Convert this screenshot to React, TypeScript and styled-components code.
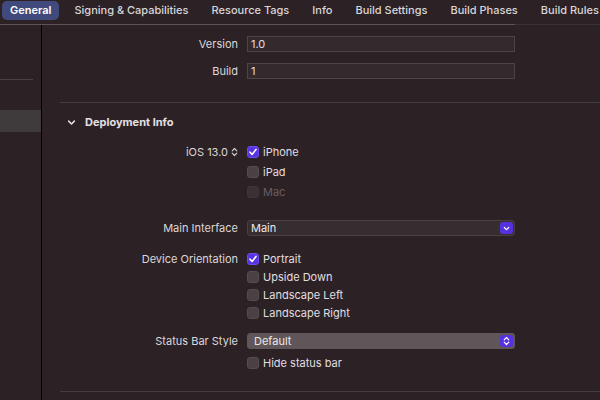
import React from 'react';
import styled, { createGlobalStyle } from 'styled-components';

const GlobalStyle = createGlobalStyle`
  html, body {
    margin: 0;
    padding: 0;
    background: #2c2226;
  }
  #root {
    width: 600px;
    height: 400px;
    overflow: hidden;
  }
`;

const Page = styled.div`
  display: flex;
  flex-direction: column;
  width: 600px;
  height: 400px;
  background: #2c2226;
  color: #dcd7d9;
  font-family: Inter, 'Noto Sans', sans-serif;
  font-size: 11px;
  overflow: hidden;
`;

const TabBar = styled.div`
  display: flex;
  align-items: center;
  height: 24px;
  flex-shrink: 0;
  padding-left: 2px;
`;

const Tab = styled.div<{ $active?: boolean }>`
  display: flex;
  align-items: center;
  height: 19px;
  margin-top: -4px;
  padding: 0 8px;
  margin-right: 7px;
  border-radius: 5px;
  background: ${({ $active }) => ($active ? '#414a7c' : 'transparent')};
  color: ${({ $active }) => ($active ? '#ffffff' : '#dad5d7')};
  font-weight: ${({ $active }) => ($active ? 600 : 500)};
  white-space: nowrap;
  flex-shrink: 0;
`;

const TabLine = styled.div`
  height: 1px;
  flex-shrink: 0;
  background: linear-gradient(to right, #5b5459 515px, #3a3135 515px);
`;

const Body = styled.div`
  display: flex;
  flex: 1;
  min-height: 0;
`;

const Sidebar = styled.div`
  width: 41px;
  flex-shrink: 0;
  border-right: 1px solid #000;
  display: flex;
  flex-direction: column;
`;

const SideRule = styled.div`
  margin-top: 54px;
  width: 33px;
  height: 1px;
  background: #4a4144;
`;

const SideSelected = styled.div`
  margin-top: 30px;
  height: 22px;
  background: #3f3b3c;
`;

const Content = styled.div`
  flex: 1;
  display: flex;
  flex-direction: column;
`;

const Row = styled.div<{ $h: number; $mt?: number }>`
  display: flex;
  align-items: center;
  height: ${({ $h }) => $h}px;
  margin-top: ${({ $mt }) => $mt ?? 0}px;
`;

const Label = styled.div`
  width: 205px;
  flex-shrink: 0;
  padding-right: 9px;
  box-sizing: border-box;
  text-align: right;
  white-space: nowrap;
  display: flex;
  justify-content: flex-end;
  align-items: center;
  gap: 3px;
`;

const Field = styled.div`
  width: 268px;
  height: 16px;
  box-sizing: border-box;
  border: 1px solid #4d4447;
  background: #342a2e;
  padding-left: 3px;
  display: flex;
  align-items: center;
  color: #e2dee0;
`;

const Popup = styled.div<{ $light?: boolean }>`
  width: 268px;
  height: 16px;
  box-sizing: border-box;
  border-radius: 3px;
  border: 1px solid ${({ $light }) => ($light ? '#5f5659' : '#4a4044')};
  background: ${({ $light }) => ($light ? '#5f5659' : '#362d30')};
  padding: 0 1px 0 ${({ $light }) => ($light ? 6 : 3)}px;
  display: flex;
  align-items: center;
  justify-content: space-between;
  color: #ece8ea;
`;

const PopupButton = styled.div`
  width: 13px;
  height: 12px;
  border-radius: 3px;
  background: #5531e0;
  display: flex;
  align-items: center;
  justify-content: center;
`;

const Separator = styled.div<{ $mt: number }>`
  margin-left: 18px;
  margin-top: ${({ $mt }) => $mt}px;
  height: 1px;
  background: #453c3f;
`;

const SectionHeader = styled.div`
  display: flex;
  align-items: center;
  gap: 9px;
  height: 20px;
  margin-top: 9px;
  padding-left: 25px;
  font-weight: 700;
  color: #e4e0e2;
`;

const Check = styled.div<{ $checked?: boolean; $disabled?: boolean }>`
  width: 12px;
  height: 12px;
  box-sizing: border-box;
  border-radius: 3px;
  flex-shrink: 0;
  background: ${({ $checked, $disabled }) =>
    $checked ? '#5734e2' : $disabled ? '#3a3134' : '#4a4145'};
  border: 1px solid ${({ $checked, $disabled }) =>
    $checked ? '#6b4cf0' : $disabled ? '#3f3639' : '#554c50'};
  display: flex;
  align-items: center;
  justify-content: center;
`;

const CheckLabel = styled.span<{ $disabled?: boolean }>`
  margin-left: 4px;
  color: ${({ $disabled }) => ($disabled ? '#675e62' : '#e2dee0')};
`;

const Control = styled.div`
  display: flex;
  align-items: center;
`;

const CheckMark = () => (
  <svg width="10" height="10" viewBox="0 0 10 10">
    <path d="M2 5.2 L4.1 7.4 L8 2.4" fill="none" stroke="#fff" strokeWidth="1.6" strokeLinecap="round" strokeLinejoin="round" />
  </svg>
);

const ChevronDown = ({ color = '#fff', size = 7 }: { color?: string; size?: number }) => (
  <svg width={size} height={size} viewBox="0 0 8 8">
    <path d="M1.5 2.8 L4 5.3 L6.5 2.8" fill="none" stroke={color} strokeWidth="1.4" strokeLinecap="round" strokeLinejoin="round" />
  </svg>
);

const UpDown = ({ color = '#fff' }: { color?: string }) => (
  <svg width="7" height="10" viewBox="0 0 7 10">
    <path d="M1.2 3.8 L3.5 1.5 L5.8 3.8 M1.2 6.2 L3.5 8.5 L5.8 6.2" fill="none" stroke={color} strokeWidth="1.2" strokeLinecap="round" strokeLinejoin="round" />
  </svg>
);

interface CheckRowProps {
  label?: React.ReactNode;
  text: string;
  checked?: boolean;
  disabled?: boolean;
  h: number;
  mt?: number;
}

const CheckRow: React.FC<CheckRowProps> = ({ label, text, checked, disabled, h, mt }) => (
  <Row $h={h} $mt={mt}>
    <Label>{label}</Label>
    <Control>
      <Check $checked={checked} $disabled={disabled}>
        {checked && <CheckMark />}
      </Check>
      <CheckLabel $disabled={disabled}>{text}</CheckLabel>
    </Control>
  </Row>
);

const tabs = ['General', 'Signing & Capabilities', 'Resource Tags', 'Info', 'Build Settings', 'Build Phases', 'Build Rules'];

export default function App() {
  return (
    <Page>
      <GlobalStyle />
      <TabBar>
        {tabs.map((t, i) => (
          <Tab key={t} $active={i === 0}>
            {t}
          </Tab>
        ))}
      </TabBar>
      <TabLine />
      <Body>
        <Sidebar>
          <SideRule />
          <SideSelected />
        </Sidebar>
        <Content>
          <Row $h={16} $mt={11}>
            <Label>Version</Label>
            <Field>1.0</Field>
          </Row>
          <Row $h={16} $mt={11}>
            <Label>Build</Label>
            <Field>1</Field>
          </Row>
          <Separator $mt={23} />
          <SectionHeader>
            <ChevronDown color="#e4e0e2" size={9} />
            Deployment Info
          </SectionHeader>
          <CheckRow
            h={20}
            mt={10}
            label={
              <>
                iOS 13.0 <UpDown color="#cfcacc" />
              </>
            }
            text="iPhone"
            checked
          />
          <CheckRow h={20} text="iPad" />
          <CheckRow h={20} text="Mac" disabled />
          <Row $h={16} $mt={18}>
            <Label>Main Interface</Label>
            <Popup>
              Main
              <PopupButton>
                <ChevronDown />
              </PopupButton>
            </Popup>
          </Row>
          <CheckRow h={19} mt={13} label="Device Orientation" text="Portrait" checked />
          <CheckRow h={18} text="Upside Down" />
          <CheckRow h={18} text="Landscape Left" />
          <CheckRow h={18} text="Landscape Right" />
          <Row $h={16} $mt={11}>
            <Label>Status Bar Style</Label>
            <Popup $light>
              Default
              <PopupButton>
                <UpDown />
              </PopupButton>
            </Popup>
          </Row>
          <CheckRow h={18} mt={5} text="Hide status bar" />
          <Separator $mt={19} />
        </Content>
      </Body>
    </Page>
  );
}
